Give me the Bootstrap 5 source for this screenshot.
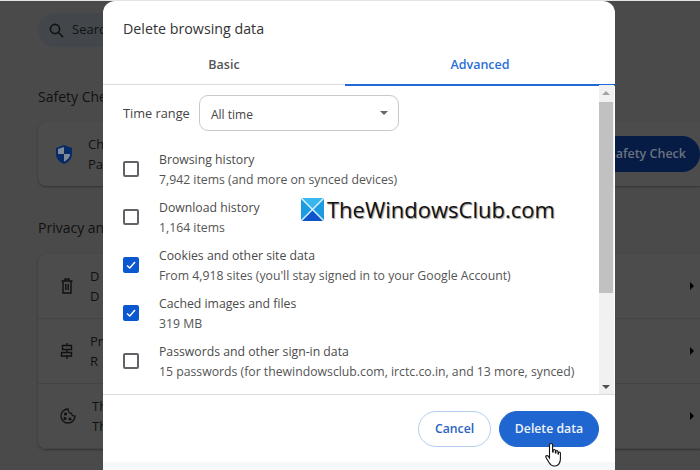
<!DOCTYPE html>
<html lang="en">
<head>
  <meta charset="UTF-8" />
  <title>Delete browsing data</title>
  <link href="https://cdn.jsdelivr.net/npm/bootstrap@5.3.2/dist/css/bootstrap.min.css" rel="stylesheet">
  <style>
    html, body { width: 700px; height: 470px; overflow: hidden; }
    body { background: #4a4a4a; font-family: "Open Sans", "Noto Sans", sans-serif; color: #333; border-top: 1px solid #e3e3e3; }

    /* dimmed settings page behind the dialog */
    .page-back { width: 700px; height: 469px; padding: 12px 0 0 38px; overflow: hidden; color: #111; font-size: 13px; background: #4a4a4a; }
    .search-pill { width: 300px; height: 34px; background: #43474b; border-radius: 17px; padding-left: 11px; }
    .back-title { font-size: 14px; line-height: 20px; color: #111; }
    .safety-title { margin-top: 40px; }
    .back-card { width: 662px; background: #4c4c4c; border-radius: 8px 0 0 8px; box-shadow: 0 1px 2px #333; }
    .safety-card { height: 64px; margin-top: 15px; padding-left: 18px; }
    .safety-btn { position: absolute; right: 0; top: 14px; width: 120px; height: 36px; line-height: 36px; border-radius: 18px; background: #061c44; color: #6a7280; font-weight: 600; font-size: 12.5px; text-align: right; padding-right: 14px; }
    .privacy-title { margin-top: 32px; }
    .back-row { height: 65px; padding-left: 22px; border-bottom: 1px solid #444; }
    .row-arrow { position: absolute; right: 6px; top: 28px; width: 0; height: 0; border-left: 4px solid #000; border-top: 4px solid transparent; border-bottom: 4px solid transparent; }

    /* dialog */
    .clear-dialog { position: absolute; left: 103px; top: 1px; width: 512px; height: 469px; background: #fff; border-radius: 12px 12px 0 0; }
    .dialog-title { height: 54px; padding: 17px 0 0 20px; font-size: 14.25px; line-height: 22px; color: #333; }
    .tab-strip { height: 30px; border-bottom: 1px solid #d9dce0; }
    .tab-item { width: 242px; text-align: center; font-size: 12.5px; font-weight: 600; line-height: 20px; color: #555; }
    .tab-item.on { flex: 1; color: #2a6fd6; border-bottom: 2px solid #1f6ad6; height: 31px; }
    .scroll-area { height: 310px; }
    .scroll-body { flex: 1; padding: 10px 0 0 20px; }
    .range-label { width: 76px; padding-top: 1px; font-size: 12.75px; color: #444; }
    .range-select { width: 200px; height: 36px; border: 1px solid #c9c9c9; border-radius: 9px; padding: 4px 0 0 11px; font-size: 12px; color: #444; position: relative; }
    .range-select::after { content: ""; position: absolute; right: 10px; top: 15px; border-top: 4px solid #666; border-left: 4px solid transparent; border-right: 4px solid transparent; }
    .data-list { margin-top: 15px; }
    .data-row { height: 48px; }
    .tick-box { width: 16px; height: 16px; border: 2px solid #5f6368; border-radius: 2px; margin: -2px 20px 0 0; flex: none; }
    .tick-box.on { background: #0b57d0; border-color: #0b57d0; }
    .data-name { font-size: 12.25px; line-height: 21px; color: #4a4a4a; white-space: nowrap; }
    .data-sub { font-size: 12.25px; line-height: 20px; color: #555; white-space: nowrap; }
    .scroll-rail { width: 15px; background: #f1f1f1; margin-right: 1px; position: relative; }
    .scroll-thumb { height: 191px; margin-top: 17px; width: 14px; background: #c1c1c1; }
    .rail-up, .rail-down { position: absolute; left: 3px; border-left: 4px solid transparent; border-right: 4px solid transparent; }
    .rail-up { top: 6px; border-bottom: 4px solid #a3a3a3; }
    .rail-down { bottom: 5px; border-top: 4px solid #505050; }
    .dialog-foot { height: 68px; border-top: 1px solid #dadce0; padding: 16px 16px 0 0; gap: 8px; }
    .foot-btn { height: 36px; padding: 0; border-radius: 18px; font-size: 12.25px; font-weight: 600; line-height: 34px; }
    .cancel-btn { width: 73px; background: #fff; color: #2a62c4; border: 1px solid #b5cdee; }
    .delete-btn { width: 100px; background: #1f66d0; color: #eef3fb; border: 1px solid #1f66d0; }
    .foot-strip { height: 8px; background: #f7f8fa; }

    /* overlays */
    .site-mark { position: absolute; left: 198px; top: 194px; z-index: 3; gap: 3px; }
    .site-text { font-family: "Open Sans", sans-serif; font-size: 22px; line-height: 28px; color: #111; text-shadow: 1px 1px 1px #999; white-space: nowrap; }
    .hand-cursor { position: absolute; left: 442px; top: 441px; z-index: 4; }
  </style>
</head>
<body>
<div class="page-back position-relative">
  <div class="search-pill d-flex align-items-center gap-2">
    <svg width="15" height="15" viewBox="0 0 15 15" fill="none" stroke="#111" stroke-width="1.6"><circle cx="6" cy="6" r="4.6"/><path d="M9.5 9.5l4.6 4.6"/></svg>
    <span>Search</span>
  </div>
  <div class="back-title safety-title">Safety Che</div>
  <div class="back-card safety-card position-relative d-flex align-items-center gap-3">
    <svg width="16" height="19" viewBox="0 0 16 19"><path d="M8 0l8 3v6c0 4.6-3.4 8.4-8 10C3.400 17.400 0 13.600 0 9V3z" fill="#062a66"/><path d="M8 2v7H2V4zM8 9h6c0 3.400-2.500 6-6 7.500z" fill="#808a99"/></svg>
    <div style="line-height:20px"><div>Ch</div><div>Pa</div></div>
    <div class="safety-btn">Safety Check</div>
  </div>
  <div class="back-title privacy-title">Privacy an</div>
  <div class="back-card mt-3">
    <div class="back-row position-relative d-flex align-items-center gap-3">
      <svg width="14" height="16" viewBox="0 0 14 16" fill="none" stroke="#111" stroke-width="1.4"><path d="M1.500 3h11M5 3V1h4v2M3 3v12h8V3M5.800 6v6M8.200 6v6"/></svg>
      <div style="line-height:20px"><div>D</div><div>D</div></div><span class="row-arrow"></span>
    </div>
    <div class="back-row position-relative d-flex align-items-center gap-3">
      <svg width="14" height="16" viewBox="0 0 14 16" fill="none" stroke="#111" stroke-width="1.4"><path d="M7 0v2.500M7 6.500v3M7 13v3M2.500 2.500h9v4h-9zM1.500 9.500h10v3.500h-10z"/></svg>
      <div style="line-height:20px"><div>Pr</div><div>R</div></div><span class="row-arrow"></span>
    </div>
    <div class="back-row position-relative d-flex align-items-center gap-3">
      <svg width="16" height="16" viewBox="0 0 16 16" fill="none" stroke="#111" stroke-width="1.3"><path d="M8 1a7 7 0 1 0 7 7c-2 .3-3.300-.8-3.500-2.500C9.800 5.500 8.300 3.500 8 1z"/><circle cx="5.500" cy="6" r=".9" fill="#111"/><circle cx="5" cy="10.500" r=".9" fill="#111"/><circle cx="10" cy="11" r=".9" fill="#111"/></svg>
      <div style="line-height:20px"><div>Th</div><div>Th</div></div><span class="row-arrow"></span>
    </div>
  </div>
</div>

<div class="clear-dialog d-flex flex-column">
  <div class="dialog-title">Delete browsing data</div>
  <div class="tab-strip d-flex">
    <div class="tab-item">Basic</div>
    <div class="tab-item on">Advanced</div>
  </div>
  <div class="scroll-area d-flex">
    <div class="scroll-body">
      <div class="d-flex align-items-center">
        <div class="range-label">Time range</div>
        <div class="range-select d-flex align-items-center">All time</div>
      </div>
      <div class="data-list">
        <div class="data-row d-flex align-items-center">
          <span class="tick-box"></span>
          <div><div class="data-name">Browsing history</div><div class="data-sub">7,942 items (and more on synced devices)</div></div>
        </div>
        <div class="data-row d-flex align-items-center">
          <span class="tick-box"></span>
          <div><div class="data-name">Download history</div><div class="data-sub">1,164 items</div></div>
        </div>
        <div class="data-row d-flex align-items-center">
          <span class="tick-box on d-flex"><svg width="12" height="12" viewBox="0 0 12 12" fill="none" stroke="#fff" stroke-width="1.500"><path d="M2 6.500l2.800 2.500L10 3"/></svg></span>
          <div><div class="data-name">Cookies and other site data</div><div class="data-sub">From 4,918 sites (you'll stay signed in to your Google Account)</div></div>
        </div>
        <div class="data-row d-flex align-items-center">
          <span class="tick-box on d-flex"><svg width="12" height="12" viewBox="0 0 12 12" fill="none" stroke="#fff" stroke-width="1.500"><path d="M2 6.500l2.800 2.500L10 3"/></svg></span>
          <div><div class="data-name">Cached images and files</div><div class="data-sub">319 MB</div></div>
        </div>
        <div class="data-row d-flex align-items-center">
          <span class="tick-box"></span>
          <div><div class="data-name">Passwords and other sign-in data</div><div class="data-sub">15 passwords (for thewindowsclub.com, irctc.co.in, and 13 more, synced)</div></div>
        </div>
      </div>
    </div>
    <div class="scroll-rail">
      <span class="rail-up"></span>
      <div class="scroll-thumb"></div>
      <span class="rail-down"></span>
    </div>
  </div>
  <div class="dialog-foot d-flex justify-content-end align-items-start">
    <button type="button" class="btn foot-btn cancel-btn">Cancel</button>
    <button type="button" class="btn foot-btn delete-btn">Delete data</button>
  </div>
  <div class="foot-strip"></div>

  <div class="site-mark d-flex align-items-center">
    <svg width="23" height="23" viewBox="0 0 23 23"><rect width="23" height="23" fill="#2aa7e8"/><path d="M0 0l11.500 11.500L23 0z" fill="#3ab6ef"/><path d="M0 23l11.500-11.500L23 23z" fill="#0f55c9"/><path d="M0 0l11.500 11.500L0 23zM23 0L11.500 11.500 23 23z" fill="#1d9be0"/><path d="M0 0l23 23M23 0L0 23" stroke="#d8f0fb" stroke-width="1.500"/></svg>
    <span class="site-text">TheWindowsClub.com</span>
  </div>
  <svg class="hand-cursor" width="18" height="26" viewBox="0 0 18 26"><path d="M6 1.500c1 0 1.600.7 1.600 1.700V10h.6V8.500c0-1.400 2.200-1.400 2.200 0V11h.5V9.500c0-1.300 2.100-1.300 2.100 0V12h.4v-1c0-1.300 2-1.300 2 0v6c0 3.500-2 7-5.500 7H9c-2.500 0-3.500-1-5-3.500l-3-5c-.8-1.400 1-2.600 2.200-1.400L4.500 16V3.200C4.500 2.200 5 1.500 6 1.500z" fill="#fff" stroke="#111" stroke-width="1.100"/></svg>
</div>
<script src="https://cdn.jsdelivr.net/npm/bootstrap@5.3.2/dist/js/bootstrap.bundle.min.js"></script>
</body>
</html>
